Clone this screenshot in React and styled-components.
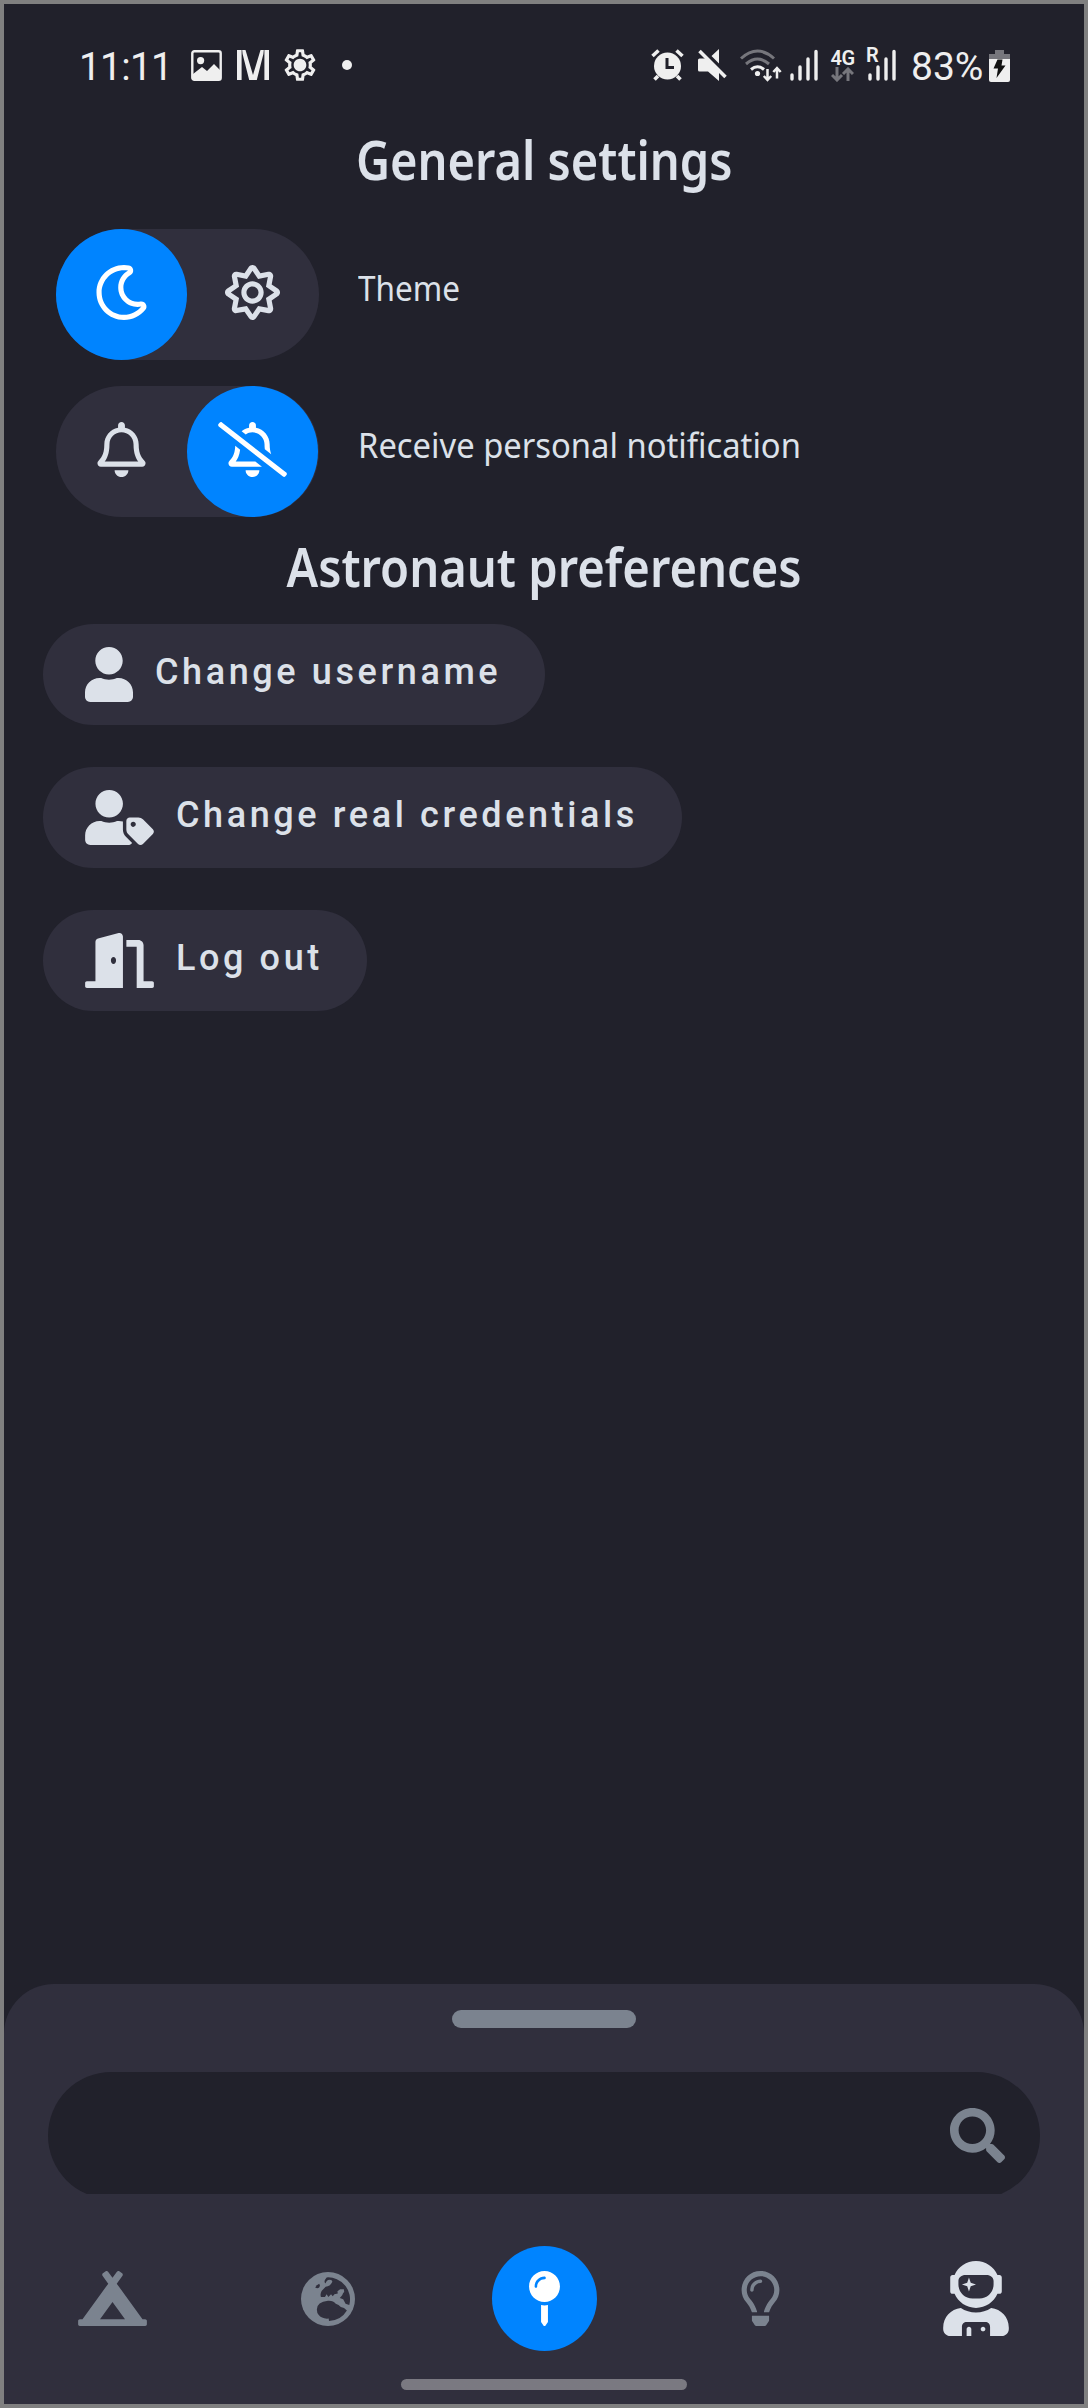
import React from "react";
import styled, { createGlobalStyle } from "styled-components";
import {
  FaRegMoon,
  FaRegSun,
  FaRegBell,
  FaRegBellSlash,
  FaUser,
  FaUserTag,
  FaDoorOpen,
  FaSearch,
  FaCampground,
  FaMapPin,
  FaRegLightbulb,
  FaUserAstronaut,
} from "react-icons/fa";
import { MdOutlineSettings } from "react-icons/md";

const c = {
  bg: "#21212b",
  surface: "#302f3d",
  text: "#dce1e9",
  muted: "#7b838f",
  accent: "#0084ff",
  status: "#efefef",
  dim: "#76767c",
};

const GlobalStyle = createGlobalStyle`
  *, *::before, *::after { box-sizing: border-box; }
  body { margin: 0; background: ${c.bg}; }
  svg { display: block; flex: none; }
`;

const Screen = styled.div`
  width: 1088px;
  height: 2408px;
  border: 4px solid #808080;
  background: ${c.bg};
  color: ${c.text};
  display: flex;
  flex-direction: column;
  overflow: hidden;
`;

const StatusBar = styled.header`
  height: 115px;
  padding: 38px 74px 0 75px;
  display: flex;
  align-items: flex-start;
  justify-content: space-between;
  color: ${c.status};
  font-family: Roboto, sans-serif;
`;

const StatusGroup = styled.div`
  display: flex;
  align-items: center;
  height: 46px;
`;

const StatusText = styled.span`
  padding-top: 3px;
  font-size: 39px;
  line-height: 46px;
  white-space: nowrap;
  letter-spacing: ${(p) => p.$spacing || 0}px;
  width: ${(p) => p.$width}px;
`;

const Slot = styled.span`
  display: flex;
  margin-left: ${(p) => p.$gap}px;
`;

const Network = styled.span`
  display: flex;
  flex-direction: column;
  align-items: center;
  width: 25px;
  margin-left: 12px;
  font-size: 20px;
  font-weight: 600;
  letter-spacing: -0.5px;
  line-height: 18px;
`;

const RoamingSignal = styled.span`
  position: relative;
  display: flex;
  margin-left: 13px;
`;

const RoamingMark = styled.span`
  position: absolute;
  left: -2px;
  top: -4px;
  font-size: 20px;
  font-weight: 600;
  line-height: 20px;
`;

const Content = styled.main`
  flex: 1;
  display: flex;
  flex-direction: column;
`;

const Heading = styled.h1`
  margin: 0;
  align-self: center;
  height: 80px;
  font-family: "Noto Sans", sans-serif;
  font-size: 54px;
  font-weight: 600;
  line-height: 80px;
  white-space: nowrap;
  transform: scaleX(${(p) => p.$condense});
`;

const Toggles = styled.section`
  display: flex;
  flex-direction: column;
  gap: 26px;
  padding: 30px 52px 9px;
`;

const SettingRow = styled.div`
  display: flex;
  align-items: center;
  gap: 39px;
`;

const Switch = styled.div`
  display: flex;
  width: 263px;
  height: 131px;
  border-radius: 66px;
  background: ${c.surface};
`;

const Option = styled.button`
  display: flex;
  align-items: center;
  justify-content: center;
  width: 131px;
  height: 131px;
  padding: 0 0 4px;
  border: 0;
  border-radius: 50%;
  background: ${(p) => (p.$active ? c.accent : "transparent")};
  color: ${(p) => (p.$active ? "#fff" : c.text)};

  svg {
    width: ${(p) => p.$iconWidth || 55}px;
    height: 55px;
  }
`;

const Label = styled.span`
  padding-bottom: 13px;
  font-family: "Noto Sans", sans-serif;
  font-size: 35px;
  line-height: 50px;
  white-space: nowrap;
  transform: scaleX(${(p) => p.$condense});
  transform-origin: left;
`;

const Actions = styled.section`
  display: flex;
  flex-direction: column;
  align-items: flex-start;
  gap: 42px;
  padding: 18px 39px 0;
`;

const ActionButton = styled.button`
  display: flex;
  align-items: center;
  width: ${(p) => p.$width}px;
  height: 101px;
  padding: 0 0 0 42px;
  gap: 22px;
  border: 0;
  border-radius: 51px;
  background: ${c.surface};
  color: ${c.text};
  font-family: Roboto, sans-serif;
  font-size: 36px;
  font-weight: 500;
  letter-spacing: 3.6px;
  white-space: nowrap;

  svg {
    width: ${(p) => p.$iconWidth}px;
    height: 55px;
  }
  span { padding-bottom: 5px; }
`;

const Sheet = styled.footer`
  height: 420px;
  padding-top: 26px;
  border-radius: 50px 50px 0 0;
  background: ${c.surface};
  display: flex;
  flex-direction: column;
  align-items: center;
`;

const Handle = styled.div`
  width: 184px;
  height: 18px;
  border-radius: 9px;
  background: ${c.muted};
`;

const SearchClip = styled.div`
  width: 992px;
  height: 122px;
  margin-top: 44px;
  overflow: hidden;
`;

const SearchField = styled.div`
  display: flex;
  justify-content: flex-end;
  height: 127px;
  padding: 36px 35px 0 0;
  border-radius: 64px;
  background: ${c.bg};
  color: ${c.muted};
  font-size: 55px;
`;

const Nav = styled.nav`
  display: grid;
  grid-template-columns: repeat(5, 1fr);
  align-items: center;
  justify-items: center;
  width: 100%;
  height: 105px;
  margin-top: 52px;
`;

const NavItem = styled.div`
  display: flex;
  align-items: center;
  justify-content: center;
  width: 105px;
  height: 105px;
  border-radius: 50%;
  background: ${(p) => (p.$active ? c.accent : "transparent")};
  color: ${(p) => p.$color || c.muted};

  svg {
    width: ${(p) => p.$iconWidth || 55}px;
    height: ${(p) => p.$iconHeight || 55}px;
  }
`;

const HomeBar = styled.div`
  width: 286px;
  height: 11px;
  margin-top: 28px;
  border-radius: 6px;
  background: #7a7981;
`;

const PhotoIcon = () => (
  <svg width="31" height="31" viewBox="0 0 31 31">
    <rect x="1.3" y="1.3" width="28.4" height="28.4" rx="2" fill="none" stroke="currentColor" strokeWidth="2.4" />
    <circle cx="9.6" cy="10.6" r="3.6" fill="currentColor" />
    <path d="M2 24l9-7 5 4 7-7 7 7v8H2z" fill="currentColor" />
  </svg>
);

const MailIcon = () => (
  <svg width="32" height="30" viewBox="0 0 32 30" fill="currentColor">
    <rect x="0" y="0" width="4.6" height="30" />
    <rect x="27.4" y="0" width="4.6" height="30" />
    <path d="M5.2 0H8.5l7.5 25 7.5-25h3.3l-.4 4-6.6 26h-7.600L5.6 4z" />
  </svg>
);

const GearIcon = () => (
  <svg width="38" height="38" viewBox="0 0 24 24">
    <MdOutlineSettings size={24} />
    <circle cx="12" cy="12" r="3.5" fill="currentColor" />
  </svg>
);

const AlarmIcon = () => (
  <svg width="33" height="32" viewBox="0 0 33 32">
    <circle cx="16.5" cy="17" r="13.5" fill="currentColor" />
    <path d="M16 9v9.500h7" fill="none" stroke={c.bg} strokeWidth="3" />
    <path d="M1.500 7l6-5.500M31.500 7l-6-5.500M7 27l-3.500 3.500M26 27l3.500 3.500" fill="none" stroke="currentColor" strokeWidth="3.6" />
  </svg>
);

const MuteIcon = () => (
  <svg width="29" height="32" viewBox="0 0 29 32">
    <path d="M0 11q0-1.500 1.500-1.500H8L21 22v10l-11-9.500H1.500Q0 22.500 0 21zM21 0v14.500L13.500 7z" fill="currentColor" />
    <path d="M1.500 2l26 26" stroke="currentColor" strokeWidth="3.6" />
  </svg>
);

const WifiIcon = () => (
  <svg width="42" height="33" viewBox="0 0 42 33" fill="none" strokeWidth="3">
    <path d="M1 9.500q16.500-15 33 0M6 15q11.500-10 23 0" stroke={c.dim} />
    <path d="M11 20.500q6.500-5.500 13 0" stroke="currentColor" />
    <circle cx="17.5" cy="24.5" r="2.6" fill="currentColor" />
    <path d="M27.500 20v11M23.800 27l3.700 4 3.700-4M37 29.500V19M33.300 23l3.700-4 3.700 4" stroke="currentColor" strokeWidth="2.5" />
  </svg>
);

const SignalIcon = () => (
  <svg width="28" height="32" viewBox="0 0 28 32" stroke="currentColor" strokeWidth="3.4" strokeLinecap="round">
    <path d="M2 26v4M10 18v12M18 10v20M26 2.500v27.500" />
  </svg>
);

const DataArrows = () => (
  <svg width="23" height="15" viewBox="0 0 23 15" fill="none" stroke={c.dim} strokeWidth="3">
    <path d="M6 0v12M1 8l5 5 5-5M17 14V3M12 7l5-5 5 5" />
  </svg>
);

const BatteryIcon = () => (
  <svg width="21" height="33" viewBox="0 0 21 33">
    <path d="M6 1h9v4h6v5H0V5h6z" fill={c.dim} />
    <path d="M0 10h21v21q0 2-2 2H2q-2 0-2-2z" fill="currentColor" />
    <path d="M8.500 10.500h5l-1 6h4L7.500 29l1.500-9.500H4.500z" fill="#111" />
  </svg>
);

const EarthIcon = () => (
  <svg viewBox="0 0 160 160">
    <circle cx="80" cy="80" r="80" fill="currentColor" />
    <g fill={c.surface}>
      <path d="M42 46q4-8 12-11q4 6-1 12q-5 3-11-1z" />
      <path d="M76 16A65 65 0 0 1 143 98L132 94L125 81L115 77L122 69L125 62L128 59L127 51L116 51L108 57L109 64L99 66L94 72L89 66L81 74L76 66L71 74L59 74Q56 66 61 56L73 44Q86 43 93 29Q92 21 80 24Q74 31 72 34Q66 27 76 16z" />
      <path d="M47 111Q47 88 80 85Q96 84 103 94Q112 96 118 104Q128 105 136 114Q119 143 83 145L82 138Q62 140 52 127Q47 121 47 111z" />
    </g>
    <path d="M76 37q2-10 9-9" fill="none" stroke="currentColor" strokeWidth="7" />
  </svg>
);

export default function App() {
  return (
    <>
      <GlobalStyle />
      <Screen>
        <StatusBar>
          <StatusGroup>
            <StatusText $width={97} $spacing={-0.8}>11:11</StatusText>
            <Slot $gap={15}><PhotoIcon /></Slot>
            <Slot $gap={15}><MailIcon /></Slot>
            <Slot $gap={12}><GearIcon /></Slot>
            <Slot $gap={23}>
              <svg width="10" height="10"><circle cx="5" cy="5" r="5" fill="currentColor" /></svg>
            </Slot>
          </StatusGroup>
          <StatusGroup>
            <Slot $gap={0}><AlarmIcon /></Slot>
            <Slot $gap={14}><MuteIcon /></Slot>
            <Slot $gap={13}><WifiIcon /></Slot>
            <Slot $gap={8}><SignalIcon /></Slot>
            <Network>
              4G
              <DataArrows />
            </Network>
            <RoamingSignal>
              <RoamingMark>R</RoamingMark>
              <SignalIcon />
            </RoamingSignal>
            <Slot $gap={15}>
              <StatusText $width={78}>83%</StatusText>
            </Slot>
            <BatteryIcon />
          </StatusGroup>
        </StatusBar>

        <Content>
          <Heading $condense={0.871}>General settings</Heading>
          <Toggles>
            <SettingRow>
              <Switch>
                <Option $active><FaRegMoon /></Option>
                <Option><FaRegSun /></Option>
              </Switch>
              <Label $condense={0.9}>Theme</Label>
            </SettingRow>
            <SettingRow>
              <Switch>
                <Option><FaRegBell /></Option>
                <Option $active $iconWidth={69}><FaRegBellSlash /></Option>
              </Switch>
              <Label $condense={0.936}>Receive personal notification</Label>
            </SettingRow>
          </Toggles>
          <Heading as="h2" $condense={0.873}>Astronaut preferences</Heading>
          <Actions>
            <ActionButton $width={502} $iconWidth={48}><FaUser /><span>Change username</span></ActionButton>
            <ActionButton $width={639} $iconWidth={69}><FaUserTag /><span>Change real credentials</span></ActionButton>
            <ActionButton $width={324} $iconWidth={69}><FaDoorOpen /><span>Log out</span></ActionButton>
          </Actions>
        </Content>

        <Sheet>
          <Handle />
          <SearchClip>
            <SearchField><FaSearch /></SearchField>
          </SearchClip>
          <Nav>
            <NavItem $iconWidth={69}><FaCampground /></NavItem>
            <NavItem $iconWidth={54} $iconHeight={54}><EarthIcon /></NavItem>
            <NavItem $active $color="#fff"><FaMapPin /></NavItem>
            <NavItem><FaRegLightbulb /></NavItem>
            <NavItem $iconWidth={66} $iconHeight={75} $color={c.text}><FaUserAstronaut /></NavItem>
          </Nav>
          <HomeBar />
        </Sheet>
      </Screen>
    </>
  );
}
